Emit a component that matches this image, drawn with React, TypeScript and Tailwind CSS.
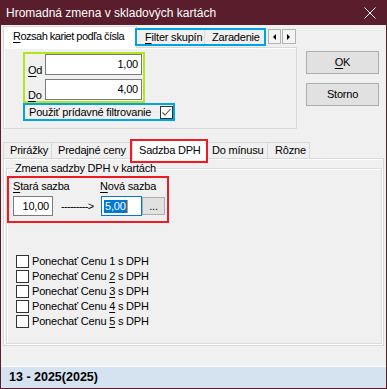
import React from "react"

const U = ({ children }: { children: React.ReactNode }) => (
  <span className="underline decoration-1 underline-offset-[2px]">{children}</span>
)

const Check = ({ checked }: { checked?: boolean }) => (
  <div className="w-[13px] h-[13px] shrink-0 border border-[#333333] bg-white flex items-center justify-center">
    {checked && (
      <svg width="11" height="11" viewBox="0 0 11 11">
        <polyline points="1.5,5.5 4,8 9.5,2" fill="none" stroke="#555555" strokeWidth="1.1" />
      </svg>
    )}
  </div>
)

const keep = [
  { n: "1", u: false },
  { n: "2", u: true },
  { n: "3", u: true },
  { n: "4", u: true },
  { n: "5", u: true },
]

export default function App() {
  return (
    <div className="w-[387px] h-[389px] bg-[#5a1d2b] flex flex-col px-px pb-px font-['Liberation_Sans',Arial,sans-serif] text-black">
      {/* title bar */}
      <div className="h-[25px] shrink-0 flex items-center justify-between pl-[5px] pr-[10px] text-white text-[12px]">
        <span>Hromadná zmena v skladových kartách</span>
        <svg width="12" height="12" viewBox="0 0 12 12">
          <path d="M0.5 0.5 L11.5 11.5 M11.5 0.5 L0.5 11.5" stroke="#ffffff" strokeWidth="1" />
        </svg>
      </div>

      <div className="flex-1 bg-[#f0f0f0] flex flex-col text-[11px] leading-[13px] tracking-[-0.2px]">
        {/* upper part */}
        <div className="flex pt-px pl-[2px]">
          <div className="w-[294px] flex flex-col">
            <div className="h-[21px] flex items-start">
              <div className="relative z-10 w-[134px] h-[22px] shrink-0 bg-white border border-b-0 border-[#d9d9d9] pl-[9px] pt-[3px] tracking-[-0.5px]">
                <U>R</U>ozsah kariet podľa čísla
              </div>
              <div className="-ml-[2px] mt-[2px] h-[18px] border-2 border-[#00a2e8] flex relative z-20">
                <div className="w-[68px] h-full bg-[#f0f0f0] border-r border-[#dcdcdc] pl-[8px] flex items-center">
                  <U>F</U>ilter skupín
                </div>
                <div className="w-[59px] h-full bg-[#f0f0f0] pl-[7px] flex items-center">Zaradenie</div>
              </div>
              <div className="ml-[2px] mt-[3px] flex gap-px">
                <div className="w-[13px] h-[15px] border border-[#b4b4b4] bg-[#f4f4f4] flex items-center justify-center">
                  <svg width="4" height="6" viewBox="0 0 4 6"><path d="M3 0 L0 3 L3 6 Z" fill="#000" /></svg>
                </div>
                <div className="w-[14px] h-[15px] border border-[#b4b4b4] bg-[#f4f4f4] flex items-center justify-center">
                  <svg width="4" height="6" viewBox="0 0 4 6"><path d="M0 0 L3 3 L0 6 Z" fill="#000" /></svg>
                </div>
              </div>
            </div>

            <div className="h-[82px] border border-[#d9d9d9] bg-[#f0f0f0] shadow-[inset_1px_1px_0_#ffffff] pl-[19px] pt-[4px]">
              <div className="w-[122px] h-[51px] border-2 border-[#b5e61d] flex flex-col gap-[4px]">
                <div className="flex h-[21px] items-start">
                  <span className="w-[20px] pl-[3px] pt-[10px]"><U>O</U>d</span>
                  <div className="w-[97px] h-[21px] border border-[#7a7a7a] bg-white flex items-center justify-end pr-[3px]">1,00</div>
                </div>
                <div className="flex h-[21px] items-start">
                  <span className="w-[20px] pl-[3px] pt-[10px]"><U>D</U>o</span>
                  <div className="w-[97px] h-[21px] border border-[#7a7a7a] bg-white flex items-center justify-end pr-[3px]">4,00</div>
                </div>
              </div>
              <div className="w-[152px] h-[18px] border-2 border-[#00a2e8] flex items-center pl-[4px]">
                <span>Použiť prídavné filtrovanie</span>
                <div className="ml-auto">
                  <Check checked />
                </div>
              </div>
            </div>
          </div>

          <div className="ml-[9px] mt-[25px] flex flex-col gap-[9px]">
            <button className="w-[73px] h-[23px] border border-[#adadad] bg-[#e1e1e1] flex items-center justify-center">
              <U>O</U>K
            </button>
            <button className="w-[73px] h-[23px] border border-[#adadad] bg-[#e1e1e1] flex items-center justify-center">
              Storno
            </button>
          </div>
        </div>

        {/* lower tab control */}
        <div className="ml-[2px] mt-[10px] w-[381px] flex flex-col">
          <div className="h-[19px] flex items-end">
            <div className="w-[49px] h-[16px] border border-b-0 border-[#d9d9d9] pl-[6px] pt-px">Prirážky</div>
            <div className="w-[80px] h-[16px] border border-b-0 border-l-0 border-[#d9d9d9] pl-[6px] pt-px">Predajné ceny</div>
            <div className="relative w-[76px] h-[20px] -mb-px z-10 bg-white border border-b-0 border-[#d9d9d9] pl-[6px] pt-[4px]">
              Sadzba DPH
              <div className="absolute -left-[3px] -top-px -right-px -bottom-[4px] border-2 border-[#ed1c24]" />
            </div>
            <div className="w-[60px] h-[16px] border border-b-0 border-l-0 border-[#d9d9d9] pl-[4px] pt-px">Do mínusu</div>
            <div className="w-[42px] h-[16px] border border-b-0 border-l-0 border-[#d9d9d9] pl-[7px] pt-px">Rôzne</div>
          </div>

          <div className="h-[188px] border border-[#d9d9d9] bg-[#f0f0f0] shadow-[inset_1px_1px_0_#ffffff] pl-[2px] pt-[3px]">
            <fieldset className="w-[376px] h-[182px] border border-[#dcdcdc] shadow-[inset_1px_1px_0_#ffffff,1px_1px_0_#ffffff]">
              <legend className="ml-[7px] px-px">Zmena sadzby DPH v kartách</legend>
              <div className="mt-px w-[162px] h-[47px] border-2 border-[#ed1c24] flex flex-col">
                <div className="flex pl-[4px] pt-[2px]">
                  <span className="w-[87px]"><U>S</U>tará sazba</span>
                  <span><U>N</U>ová sazba</span>
                </div>
                <div className="flex items-center pl-[4px] mt-[3px]">
                  <div className="w-[40px] h-[20px] border border-[#7a7a7a] bg-white flex items-center justify-end pr-[3px]">10,00</div>
                  <div className="w-[48px] pl-[8px] tracking-[-0.7px]">---------&gt;</div>
                  <div className="w-[41px] h-[20px] border border-[#0078d7] bg-white flex items-center pl-[2px]">
                    <span className="bg-[#0078d7] text-white px-px">5,00</span>
                    <span className="w-px h-[13px] bg-[#ff8c00]" />
                  </div>
                  <div className="w-[23px] h-[18px] border border-[#adadad] bg-[#e1e1e1] flex items-center justify-center">...</div>
                </div>
              </div>

              <div className="mt-[32px] ml-[9px] flex flex-col gap-[2px]">
                {keep.map((k) => (
                  <div key={k.n} className="h-[13px] flex items-center">
                    <Check />
                    <span className="ml-[3px]">
                      Ponechať Cenu {k.u ? <U>{k.n}</U> : k.n} s DPH
                    </span>
                  </div>
                ))}
              </div>
            </fieldset>
          </div>
        </div>

        {/* status bar */}
        <div className="mt-auto h-[22px] border-t border-white bg-[#d5e3f1] pl-[8px] flex items-center font-bold text-[12.5px] tracking-normal">
          13 - 2025(2025)
        </div>
      </div>
    </div>
  )
}
